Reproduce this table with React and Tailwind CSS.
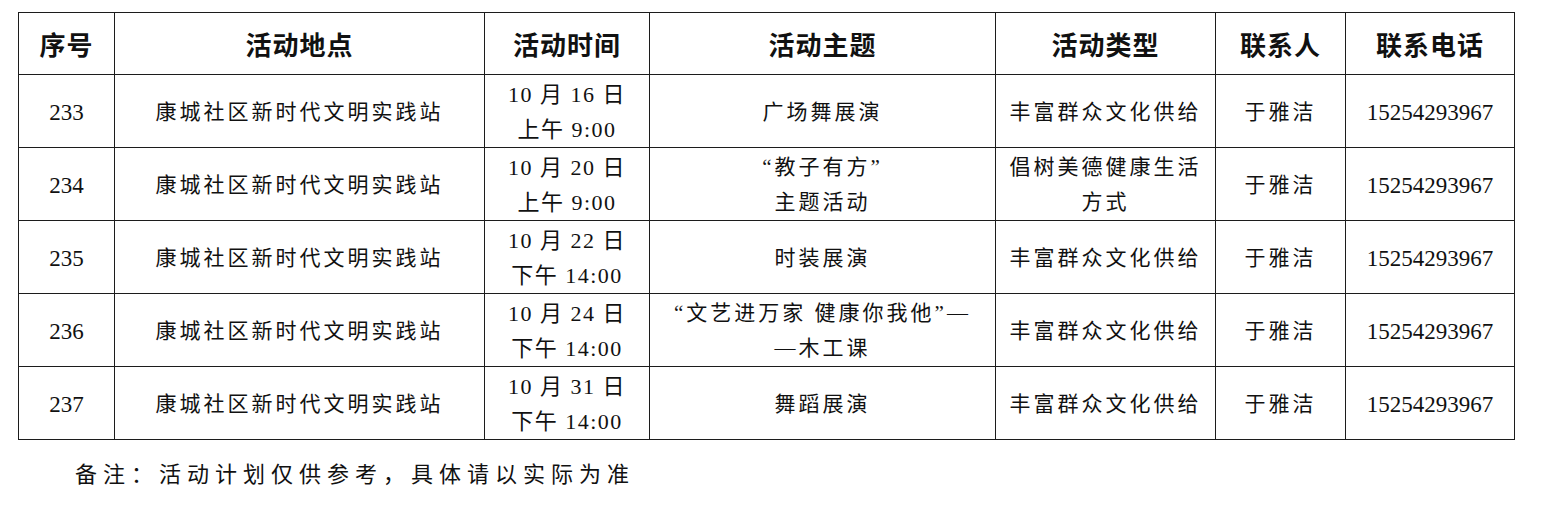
const body = '"Liberation Serif", "Noto Sans CJK SC", serif';
const head = '"Noto Sans CJK SC", "Liberation Sans", sans-serif';

const rows = [
  { no: '233', h: 'h-[73px]', date: ['10 月 16 日', '上午 9:00'], theme: ['广场舞展演'], type: ['丰富群众文化供给'] },
  { no: '234', h: 'h-[72px]', date: ['10 月 20 日', '上午 9:00'], theme: ['“教子有方”', '主题活动'], type: ['倡树美德健康生活', '方式'] },
  { no: '235', h: 'h-[73px]', date: ['10 月 22 日', '下午 14:00'], theme: ['时装展演'], type: ['丰富群众文化供给'] },
  { no: '236', h: 'h-[73px]', date: ['10 月 24 日', '下午 14:00'], theme: ['“文艺进万家 健康你我他”—', '—木工课'], type: ['丰富群众文化供给'] },
  { no: '237', h: 'h-[72px]', date: ['10 月 31 日', '下午 14:00'], theme: ['舞蹈展演'], type: ['丰富群众文化供给'] },
];

const headers = [
  ['序号', 'w-[96px]'],
  ['活动地点', 'w-[370px]'],
  ['活动时间', 'w-[165px]'],
  ['活动主题', 'w-[346px]'],
  ['活动类型', 'w-[220px]'],
  ['联系人', 'w-[130px]'],
  ['联系电话', 'w-[169px]'],
];

function Lines({ items }) {
  return items.map((t, i) => <div key={i}>{t}</div>);
}

export default function App() {
  const td = 'border border-[#1c1c1c] text-center align-middle p-0 pt-[2px] text-[21px] leading-[35px] text-[#111]';
  return (
    <div className="bg-white w-[1545px] h-[511px] pt-[12px] pl-[18px]" style={{ fontFamily: body }}>
      <table className="border-collapse table-fixed w-[1497px]">
        <thead>
          <tr className="h-[62px]">
            {headers.map(([h, w]) => (
              <th key={h} className={`${w} border border-[#1c1c1c] text-center align-middle p-0 text-[26px] font-bold tracking-[1px] text-[#111]`} style={{ fontFamily: head }}>
                {h}
              </th>
            ))}
          </tr>
        </thead>
        <tbody>
          {rows.map(r => (
            <tr key={r.no} className={r.h}>
              <td className={`${td} text-[23px]`}>{r.no}</td>
              <td className={`${td} tracking-[3px]`}>康城社区新时代文明实践站</td>
              <td className={`${td} tracking-[1.5px] text-[22px]`}>
                <Lines items={r.date} />
              </td>
              <td className={`${td} tracking-[3px]`}>
                <Lines items={r.theme} />
              </td>
              <td className={`${td} tracking-[3px]`}>
                <Lines items={r.type} />
              </td>
              <td className={`${td} tracking-[3px]`}>于雅洁</td>
              <td className={`${td} text-[23px]`}>15254293967</td>
            </tr>
          ))}
        </tbody>
      </table>
      <p className="mt-[18px] ml-[57px] text-[22px] tracking-[6px] text-[#111]">
        备注：活动计划仅供参考，具体请以实际为准
      </p>
    </div>
  );
}
